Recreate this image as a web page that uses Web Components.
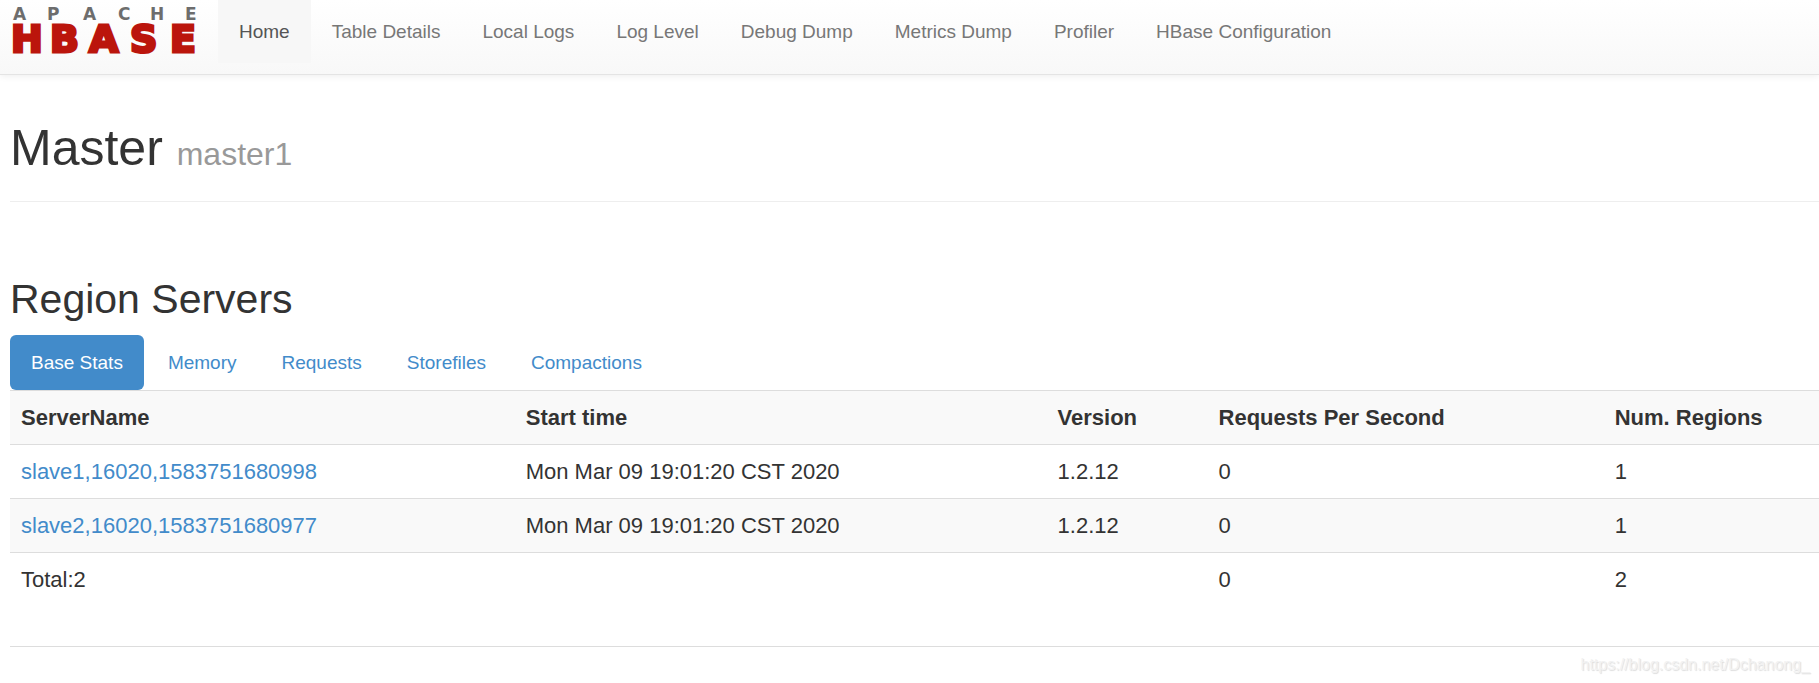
<!DOCTYPE html>
<html lang="en">
<head>
<meta charset="utf-8">
<title>Master: master1</title>
<style>
body { margin: 0; background: #fff; color: #333; font: 22px/31px "Liberation Sans", Arial, sans-serif; overflow-x: hidden; }
main { display: block; padding-left: 10px; }
</style>
</head>
<body>
<nav-bar>
  <hbase-logo slot="brand"></hbase-logo>
  <nav-item active>Home</nav-item>
  <nav-item>Table Details</nav-item>
  <nav-item>Local Logs</nav-item>
  <nav-item>Log Level</nav-item>
  <nav-item>Debug Dump</nav-item>
  <nav-item>Metrics Dump</nav-item>
  <nav-item>Profiler</nav-item>
  <nav-item>HBase Configuration</nav-item>
</nav-bar>
<main>
  <page-title>Master <span slot="sub">master1</span></page-title>
  <region-servers>
    <tab-pill active>Base Stats</tab-pill>
    <tab-pill>Memory</tab-pill>
    <tab-pill>Requests</tab-pill>
    <tab-pill>Storefiles</tab-pill>
    <tab-pill>Compactions</tab-pill>
    <server-table slot="panel"></server-table>
  </region-servers>
  <page-footer>https://blog.csdn.net/Dchanong_</page-footer>
</main>
<script>
const define = (name, html) => customElements.define(name, class extends HTMLElement {
  constructor() {
    super();
    const t = document.createElement('template');
    t.innerHTML = html;
    this.attachShadow({ mode: 'open' }).append(t.content.cloneNode(true));
  }
});

define('hbase-logo', `
<style>
:host { display: block; }
a, svg { display: block; }
svg { overflow: visible; }
text { font-family: "DejaVu Sans", sans-serif; font-weight: 700; }
.apache { font-size: 17px; fill: #6d6d6d; }
.hbase { font-size: 38px; fill: #bb150c; stroke: #bb150c; stroke-width: 3px; }
</style>
<a href="#" aria-label="Apache HBase"><svg width="184" height="46" viewBox="0 0 184 46">
  <text class="apache" y="12" x="0 34 70 105 137 172">APACHE</text>
  <text class="hbase" y="44" x="-2 37 76 117 157">HBASE</text>
</svg></a>`);

define('nav-bar', `
<style>
:host { display: block; }
nav { display: flex; height: 74px; border-bottom: 1px solid #e4e4e4; background: linear-gradient(#fff, #f8f8f8); box-shadow: 0 1px 7px rgba(0,0,0,.075); }
.brand { padding: 8px 21px 0 13px; }
.items { display: flex; align-items: flex-start; }
</style>
<nav><div class="brand"><slot name="brand"></slot></div><div class="items"><slot></slot></div></nav>`);

define('nav-item', `
<style>
:host { display: block; }
a { display: block; padding: 18px 21px; font-size: 19px; line-height: 27px; color: #777; text-decoration: none; white-space: nowrap; }
:host([active]) a { color: #555; background: #f7f7f7; }
</style>
<a href="#"><slot></slot></a>`);

define('page-title', `
<style>
:host { display: block; padding: 45px 0 24px; border-bottom: 1px solid #eee; }
h1 { margin: 0; font-size: 50px; line-height: 57px; font-weight: 400; }
small { font-size: 32px; line-height: 32px; color: #999; }
</style>
<h1><slot></slot><small><slot name="sub"></slot></small></h1>`);

define('region-servers', `
<style>
:host { display: block; padding-top: 73px; }
h2 { margin: 0 0 12px; font-size: 41px; line-height: 48px; font-weight: 400; }
.tabs { display: flex; gap: 3px; }
</style>
<section><h2>Region Servers</h2><div class="tabs"><slot></slot></div><slot name="panel"></slot></section>`);

define('tab-pill', `
<style>
:host { display: block; }
a { display: block; padding: 14px 21px; border-radius: 6px; font-size: 19px; line-height: 27px; color: #428bca; text-decoration: none; }
:host([active]) a { color: #fff; background: #428bca; }
</style>
<a href="#"><slot></slot></a>`);

define('server-table', `
<style>
:host { display: block; }
table { width: 100%; table-layout: fixed; border-collapse: collapse; }
th, td { padding: 11px; border-top: 1px solid #ddd; text-align: left; line-height: 31px; white-space: nowrap; }
tr:nth-child(odd) > * { background: #f9f9f9; }
a { color: #428bca; text-decoration: none; }
.name { width: 27.9%; } .start { width: 29.4%; } .version { width: 8.9%; } .requests { width: 21.9%; }
</style>
<table>
<colgroup><col class="name"><col class="start"><col class="version"><col class="requests"><col></colgroup>
<tbody>
<tr><th scope="col">ServerName</th><th scope="col">Start time</th><th scope="col">Version</th><th scope="col">Requests Per Second</th><th scope="col">Num. Regions</th></tr>
<tr><td><a href="#">slave1,16020,1583751680998</a></td><td>Mon Mar 09 19:01:20 CST 2020</td><td>1.2.12</td><td>0</td><td>1</td></tr>
<tr><td><a href="#">slave2,16020,1583751680977</a></td><td>Mon Mar 09 19:01:20 CST 2020</td><td>1.2.12</td><td>0</td><td>1</td></tr>
<tr><td>Total:2</td><td></td><td></td><td>0</td><td>2</td></tr>
</tbody></table>`);

define('page-footer', `
<style>
:host { display: block; margin-top: 40px; padding: 8px 9px 0 0; border-top: 1px solid #ddd; text-align: right; font-size: 16px; line-height: 20px; color: #f2f2f2; text-shadow: 1px 1px 1px #ddd; }
</style>
<slot></slot>`);
</script>
</body>
</html>
